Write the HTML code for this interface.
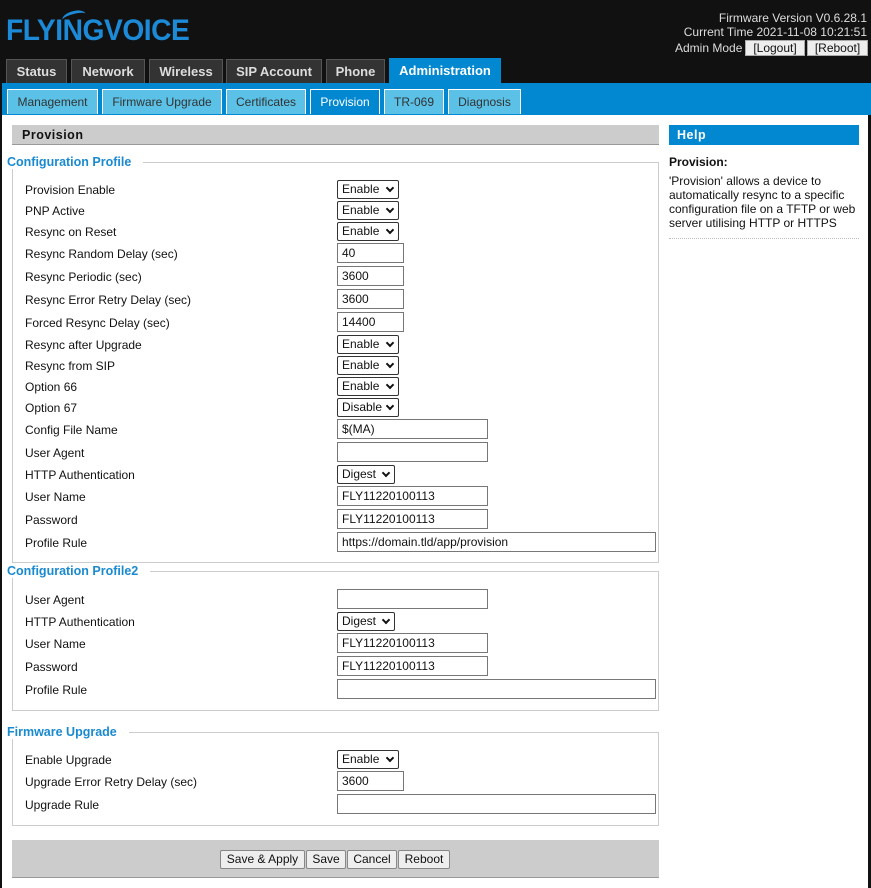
<!DOCTYPE html>
<html><head><meta charset="utf-8"><style>
*{box-sizing:border-box;margin:0;padding:0}
body{width:871px;height:888px;background:#111;position:relative;overflow:hidden;font-family:"Liberation Sans","DejaVu Sans",sans-serif;font-size:12px;color:#111}
.a{position:absolute}
.main{left:2px;top:115px;width:866px;height:773px;background:#fff}
.tab{top:59px;height:24px;background:#333;border:1px solid #555;border-bottom:none;color:#ddd;font-weight:bold;font-size:13px;text-align:center;line-height:24px}
.st{top:89px;height:25px;background:#5bc1e6;border:1px solid #fff;border-bottom:none;color:#333;font-size:12px;text-align:center;line-height:25px}
.lbl{left:25px;font-size:12px;line-height:14px}
.sel{left:337px;height:19px;border:1px solid #333;background:#fff;font-size:12px;line-height:17px;padding-left:4px;border-radius:2px}
.sel::after{content:"";position:absolute;right:5px;top:4px;width:4px;height:4px;border-right:2px solid #111;border-bottom:2px solid #111;transform:rotate(45deg)}
.inp{left:337px;height:20px;border:1px solid #777;background:#fff;font-size:12px;line-height:18px;padding-left:4px}
.fs{left:12px;width:647px;border:1px solid #ccc}
.lg{left:7px;background:#fff;color:#1a8ad0;font-weight:bold;font-size:12.5px;padding-right:12px}
.btn{top:850px;height:19px;background:#eee;border:1px solid #888;border-radius:2px;font-size:12px;text-align:center;line-height:17px}
</style></head><body>
<div class="a" style="left:6px;top:14px;font-size:30px;font-weight:bold;color:#1c8ad6;letter-spacing:-0.5px;transform:scaleX(0.94);transform-origin:left top">FLYINGVOICE</div>
<div class="a" style="left:62px;top:11px;width:24px;height:12px;border-top:3px solid #1c8ad6;border-radius:50% 50% 0 0;transform:rotate(-15deg)"></div>
<div class="a" style="right:4px;top:11px;color:#ddd;font-size:12px;text-align:right;line-height:14px">Firmware Version V0.6.28.1<br>Current Time 2021-11-08 10:21:51</div>
<div class="a" style="left:675px;top:41px;color:#ddd;font-size:12px">Admin Mode</div>
<div class="a" style="left:745px;top:40px;width:60px;height:16px;background:#eee;border:1px solid #aaa;font-size:12px;text-align:center;line-height:15px">[Logout]</div>
<div class="a" style="left:807px;top:40px;width:61px;height:16px;background:#eee;border:1px solid #aaa;font-size:12px;text-align:center;line-height:15px">[Reboot]</div>
<div class="tab a" style="left:6px;width:61px">Status</div>
<div class="tab a" style="left:71px;width:74px">Network</div>
<div class="tab a" style="left:149px;width:74px">Wireless</div>
<div class="tab a" style="left:226px;width:96px">SIP Account</div>
<div class="tab a" style="left:326px;width:59px">Phone</div>
<div class="tab a" style="left:389px;top:58px;width:112px;height:25px;background:#0288d1;border-color:#0288d1;color:#fff">Administration</div>
<div class="a" style="left:2px;top:83px;width:869px;height:32px;background:#0288d1"></div>
<div class="st a" style="left:7px;width:91px">Management</div>
<div class="st a" style="left:102px;width:120px">Firmware Upgrade</div>
<div class="st a" style="left:226px;width:80px">Certificates</div>
<div class="st a" style="left:310px;width:70px;background:#0288d1;color:#fff">Provision</div>
<div class="st a" style="left:384px;width:60px">TR-069</div>
<div class="st a" style="left:448px;width:73px">Diagnosis</div>
<div class="a main"></div>
<div class="a" style="left:12px;top:125px;width:647px;height:20px;background:#ccc;border-bottom:1px solid #999;font-weight:bold;font-size:12.5px;line-height:20px;padding-left:10px;letter-spacing:0.5px">Provision</div>
<div class="a" style="left:669px;top:125px;width:190px;height:20px;background:#0288d1;color:#fff;font-weight:bold;font-size:12.5px;line-height:20px;padding-left:8px;letter-spacing:0.5px">Help</div>
<div class="a" style="left:669px;top:155px;font-weight:bold;font-size:12px">Provision:</div>
<div class="a" style="left:669px;top:174px;width:192px;font-size:12px;line-height:14px">'Provision' allows a device to automatically resync to a specific configuration file on a TFTP or web server utilising HTTP or HTTPS</div>
<div class="a" style="left:669px;top:238px;width:190px;border-top:1px dotted #bbb"></div>

<div class="a fs" style="top:162px;height:401px"></div>
<div class="a lg" style="top:155px">Configuration Profile</div>
<div class="a fs" style="top:571px;height:140px"></div>
<div class="a lg" style="top:564px">Configuration Profile2</div>
<div class="a fs" style="top:732px;height:94px"></div>
<div class="a lg" style="top:725px">Firmware Upgrade</div>

<div class="a lbl" style="top:183px">Provision Enable</div><div class="a sel" style="top:180px;width:62px">Enable</div>
<div class="a lbl" style="top:204px">PNP Active</div><div class="a sel" style="top:201px;width:62px">Enable</div>
<div class="a lbl" style="top:225px">Resync on Reset</div><div class="a sel" style="top:222px;width:62px">Enable</div>
<div class="a lbl" style="top:247px">Resync Random Delay (sec)</div><div class="a inp" style="top:243px;width:67px">40</div>
<div class="a lbl" style="top:270px">Resync Periodic (sec)</div><div class="a inp" style="top:266px;width:67px">3600</div>
<div class="a lbl" style="top:293px">Resync Error Retry Delay (sec)</div><div class="a inp" style="top:289px;width:67px">3600</div>
<div class="a lbl" style="top:316px">Forced Resync Delay (sec)</div><div class="a inp" style="top:312px;width:67px">14400</div>
<div class="a lbl" style="top:338px">Resync after Upgrade</div><div class="a sel" style="top:335px;width:62px">Enable</div>
<div class="a lbl" style="top:359px">Resync from SIP</div><div class="a sel" style="top:356px;width:62px">Enable</div>
<div class="a lbl" style="top:380px">Option 66</div><div class="a sel" style="top:377px;width:62px">Enable</div>
<div class="a lbl" style="top:401px">Option 67</div><div class="a sel" style="top:398px;width:62px">Disable</div>
<div class="a lbl" style="top:423px">Config File Name</div><div class="a inp" style="top:419px;width:151px">$(MA)</div>
<div class="a lbl" style="top:446px">User Agent</div><div class="a inp" style="top:442px;width:151px"></div>
<div class="a lbl" style="top:468px">HTTP Authentication</div><div class="a sel" style="top:465px;width:58px">Digest</div>
<div class="a lbl" style="top:490px">User Name</div><div class="a inp" style="top:486px;width:151px">FLY11220100113</div>
<div class="a lbl" style="top:513px">Password</div><div class="a inp" style="top:509px;width:151px">FLY11220100113</div>
<div class="a lbl" style="top:536px">Profile Rule</div><div class="a inp" style="top:532px;width:319px">https://domain.tld/app/provision</div>

<div class="a lbl" style="top:593px">User Agent</div><div class="a inp" style="top:589px;width:151px"></div>
<div class="a lbl" style="top:615px">HTTP Authentication</div><div class="a sel" style="top:612px;width:58px">Digest</div>
<div class="a lbl" style="top:637px">User Name</div><div class="a inp" style="top:633px;width:151px">FLY11220100113</div>
<div class="a lbl" style="top:660px">Password</div><div class="a inp" style="top:656px;width:151px">FLY11220100113</div>
<div class="a lbl" style="top:683px">Profile Rule</div><div class="a inp" style="top:679px;width:319px"></div>

<div class="a lbl" style="top:753px">Enable Upgrade</div><div class="a sel" style="top:750px;width:62px">Enable</div>
<div class="a lbl" style="top:775px">Upgrade Error Retry Delay (sec)</div><div class="a inp" style="top:771px;width:67px">3600</div>
<div class="a lbl" style="top:798px">Upgrade Rule</div><div class="a inp" style="top:794px;width:319px"></div>

<div class="a" style="left:12px;top:840px;width:647px;height:38px;background:#ccc;border-bottom:1px solid #999"></div>
<div class="a btn" style="left:220px;width:85px">Save &amp; Apply</div>
<div class="a btn" style="left:306px;width:40px">Save</div>
<div class="a btn" style="left:347px;width:50px">Cancel</div>
<div class="a btn" style="left:398px;width:52px">Reboot</div>
</body></html>
